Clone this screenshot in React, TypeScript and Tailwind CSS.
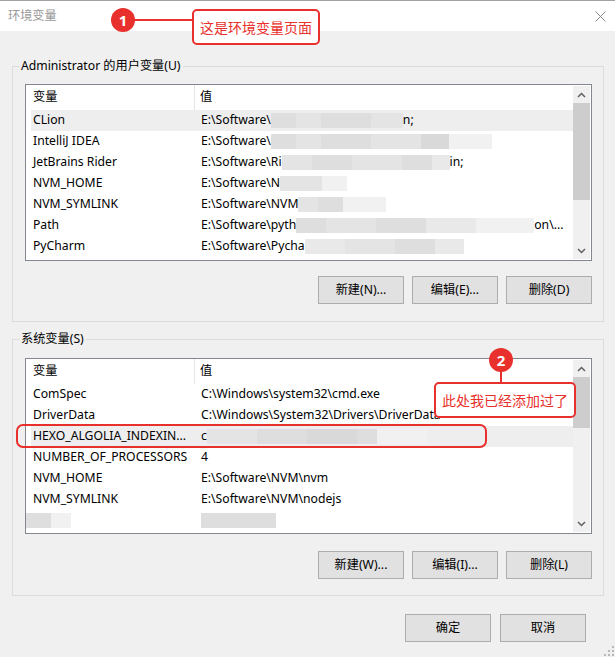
import React from "react";

const shades = ["bg-[#dedede]", "bg-[#e4e4e4]", "bg-[#d9d9d9]", "bg-[#e9e9e9]", "bg-[#f1f1f1]"];

// masked value: a run of grey blocks, softened a little
const Smudge = ({ segs }: { segs: [number, number][] }) => (
  <span className="inline-flex h-[15px] align-middle blur-[0.6px] -mt-[2px]">
    {segs.map(([w, s], i) => (
      <span key={i} className={`block h-full ${shades[s]}`} style={{ width: w }} />
    ))}
  </span>
);

interface Row {
  name: React.ReactNode;
  value: React.ReactNode;
  hot?: boolean;
  bleed?: boolean;
}

const userRows: Row[] = [
  { name: "CLion", value: <>E:\Software\<Smudge segs={[[25, 0], [25, 1], [50, 0], [32, 1]]} />n;</>, hot: true },
  { name: "IntelliJ IDEA", value: <>E:\Software\<Smudge segs={[[25, 0], [25, 1], [50, 0], [50, 1], [28, 2], [43, 4]]} /></> },
  { name: "JetBrains Rider", value: <>E:\Software\Ri<Smudge segs={[[30, 1], [40, 0], [50, 1], [30, 0], [18, 3]]} />in;</> },
  { name: "NVM_HOME", value: <>E:\Software\N<Smudge segs={[[42, 1], [25, 4]]} /></> },
  { name: "NVM_SYMLINK", value: <>E:\Software\NVM<Smudge segs={[[20, 1], [25, 0], [43, 4]]} /></> },
  { name: "Path", value: <>E:\Software\pyth<Smudge segs={[[30, 0], [50, 1], [50, 0], [50, 3], [58, 4]]} />on\...</> },
  { name: "PyCharm", value: <>E:\Software\Pycha<Smudge segs={[[40, 3], [50, 1], [40, 0], [29, 3]]} /></> },
];

const sysRows: Row[] = [
  { name: "ComSpec", value: "C:\\Windows\\system32\\cmd.exe" },
  { name: "DriverData", value: "C:\\Windows\\System32\\Drivers\\DriverData" },
  { name: "HEXO_ALGOLIA_INDEXIN...", value: <>c<Smudge segs={[[50, 1], [50, 0], [50, 2], [20, 0], [50, 4]]} /></>, hot: true },
  { name: "NUMBER_OF_PROCESSORS", value: "4" },
  { name: "NVM_HOME", value: "E:\\Software\\NVM\\nvm" },
  { name: "NVM_SYMLINK", value: "E:\\Software\\NVM\\nodejs" },
  { name: <Smudge segs={[[26, 0], [20, 4]]} />, value: <Smudge segs={[[75, 0]]} />, bleed: true },
];

const Chevron = ({ up }: { up?: boolean }) => (
  <svg width="9" height="6" viewBox="0 0 9 6" className={up ? "" : "rotate-180"}>
    <path d="M1 5 L4.5 1.5 L8 5" fill="none" stroke="#606060" strokeWidth="1.5" />
  </svg>
);

const ScrollBar = ({ thumbTop, thumbH }: { thumbTop: number; thumbH: number }) => (
  <div className="relative w-[17px] bg-[#f0f0f0] flex flex-col items-center justify-between my-[1px] mr-[1px] shrink-0">
    <div className="h-[17px] flex items-center justify-center"><Chevron up /></div>
    <div className="absolute left-0 right-0 bg-[#cdcdcd]" style={{ top: thumbTop, height: thumbH }} />
    <div className="h-[17px] flex items-center justify-center"><Chevron /></div>
  </div>
);

const VarList = ({ rows, h, thumbTop, thumbH }: { rows: Row[]; h: number; thumbTop: number; thumbH: number }) => (
  <div className="flex border border-[#828790] bg-white overflow-hidden" style={{ height: h }}>
    <div className="flex-1 min-w-0">
      <div className="flex h-[25px] items-center">
        <div className="w-[169px] pl-[7px] h-full flex items-center border-r border-[#e5e5e5]">变量</div>
        <div className="pl-[5px]">值</div>
      </div>
      {rows.map((r, i) => (
        <div key={i} className={`ml-[5px] flex h-[21px] items-center whitespace-nowrap ${r.hot ? "bg-[#eeeeee]" : ""}`}>
          <div className={`shrink-0 ${r.bleed ? "-ml-[6px] w-[170px]" : "w-[164px] pl-[2px]"}`}>{r.name}</div>
          <div className="pl-[6px] whitespace-nowrap">{r.value}</div>
        </div>
      ))}
    </div>
    <ScrollBar thumbTop={thumbTop} thumbH={thumbH} />
  </div>
);

const Btn = ({ label, w = 86 }: { label: string; w?: number }) => (
  <button className="h-[28px] bg-[#e1e1e1] border border-[#adadad] text-black flex items-center justify-center" style={{ width: w }}>
    {label}
  </button>
);

const Group = ({ title, children, pt }: { title: string; children: React.ReactNode; pt: string }) => (
  <fieldset className="border border-[#dcdcdc] p-0 m-0 mx-[12px] mr-[11px]">
    <legend className="ml-[6px] px-[2px] h-[16px] leading-[16px]">{title}</legend>
    <div className={`pl-[12px] pr-[11px] ${pt}`}>{children}</div>
  </fieldset>
);

export default function App() {
  return (
    <div className="relative w-[615px] h-[657px] overflow-hidden bg-[#f0f0f0] border-t border-[#a3a3a3] text-[12.2px] text-black font-['Noto_Sans','Noto_Sans_CJK_SC',sans-serif]">
      {/* title bar */}
      <div className="h-[30px] bg-white flex items-center justify-between pl-[8px] pr-[9px]">
        <span className="text-[#999999]">环境变量</span>
        <svg width="11" height="11" viewBox="0 0 11 11">
          <path d="M0.5 0.5 L10.5 10.5 M10.5 0.5 L0.5 10.5" stroke="#8a8a8a" strokeWidth="1" />
        </svg>
      </div>

      <div className="pt-[27px]">
        <Group title="Administrator 的用户变量(U)" pt="pt-[10px] pb-[17px]">
          <VarList rows={userRows} h={177} thumbTop={17} thumbH={97} />
          <div className="flex justify-end gap-[8px] mt-[15px]">
            <Btn label="新建(N)..." />
            <Btn label="编辑(E)..." />
            <Btn label="删除(D)" />
          </div>
        </Group>

        <div className="mt-[9px]">
          <Group title="系统变量(S)" pt="pt-[11px] pb-[16px]">
            <VarList rows={sysRows} h={176} thumbTop={17} thumbH={51} />
            <div className="flex justify-end gap-[8px] mt-[17px]">
              <Btn label="新建(W)..." />
              <Btn label="编辑(I)..." />
              <Btn label="删除(L)" />
            </div>
          </Group>
        </div>

        <div className="flex justify-end gap-[9px] mt-[18px] pr-[29px]">
          <Btn label="确定" />
          <Btn label="取消" />
        </div>
      </div>

      {/* resize grip */}
      <svg className="absolute right-0 bottom-0" width="12" height="12" viewBox="0 0 12 12">
        {[[9, 1], [9, 5], [5, 5], [9, 9], [5, 9], [1, 9]].map(([x, y], i) => (
          <rect key={i} x={x} y={y} width="2" height="2" fill="#b8b8b8" />
        ))}
      </svg>

      {/* callout 1 */}
      <div className="absolute left-[111px] top-[7px] w-[24px] h-[24px] rounded-full bg-[#e8302c] text-white font-bold text-[15px] flex items-center justify-center">1</div>
      <div className="absolute left-[134px] top-[18px] w-[59px] h-[2px] bg-[#e8302c]" />
      <div className="absolute left-[192px] top-[8px] w-[128px] h-[36px] border-2 border-[#e8302c] rounded-[5px] bg-white text-[#e8302c] text-[14px] flex items-center justify-center font-['Noto_Sans_CJK_SC',sans-serif]">
        这是环境变量页面
      </div>

      {/* callout 2 */}
      <div className="absolute left-[16px] top-[423px] w-[471px] h-[24px] border-2 border-[#e8302c] rounded-[7px]" />
      <div className="absolute left-[489px] top-[347px] w-[24px] h-[24px] rounded-full bg-[#e8302c] text-white font-bold text-[15px] flex items-center justify-center">2</div>
      <div className="absolute left-[500px] top-[370px] w-[2px] h-[12px] bg-[#e8302c]" />
      <div className="absolute left-[434px] top-[381px] w-[142px] h-[36px] border-2 border-[#e8302c] rounded-[5px] bg-white text-[#e8302c] text-[14px] flex items-center justify-center font-['Noto_Sans_CJK_SC',sans-serif]">
        此处我已经添加过了
      </div>
    </div>
  );
}
